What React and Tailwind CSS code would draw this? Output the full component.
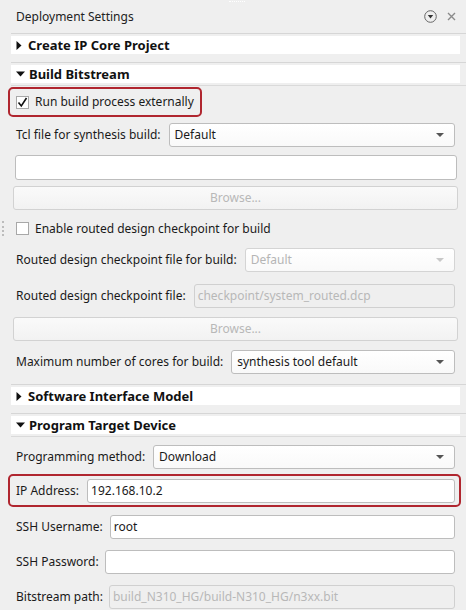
const Caret = ({ open }) =>
  open ? (
    <svg width="9" height="6" viewBox="0 0 9 6" className="mr-[4px] shrink-0">
      <path d="M0 0.5h9L4.5 5.5z" fill="#111" />
    </svg>
  ) : (
    <svg width="6" height="9" viewBox="0 0 6 9" className="mr-[6px] shrink-0">
      <path d="M0.5 0v9L5.5 4.5z" fill="#111" />
    </svg>
  );

const SectionHeader = ({ title, open, bottom }) => (
  <div className={bottom ? 'pb-[2px] border-b border-[#dadada] ml-[11px]' : 'ml-[11px]'}>
    <div className="border-t border-[#d6d6d6] pt-[2px]">
      <div className="h-[18px] mr-[6px] bg-white flex items-center pl-[5px] text-[13px] font-bold text-[#111] leading-none">
        <Caret open={open} />
        {title}
      </div>
    </div>
  </div>
);

const Select = ({ value, disabled, className = '' }) => (
  <div
    className={`h-[24px] flex items-center justify-between pl-[5px] pr-[10px] rounded-[3px] border bg-gradient-to-b from-white to-[#f9f9f9] ${
      disabled ? 'border-[#d4d4d4] text-[#b5b5b5]' : 'border-[#bdbdbd] text-[#1a1a1a]'
    } ${className}`}
  >
    <span>{value}</span>
    <svg width="8" height="4" viewBox="0 0 8 4">
      <path d="M0 0h8L4 4z" fill={disabled ? '#c8c8c8' : '#555'} />
    </svg>
  </div>
);

const Input = ({ value = '', disabled, className = '' }) => (
  <div
    className={`h-[24px] flex items-center px-[3px] rounded-[3px] border ${
      disabled ? 'bg-[#efefef] border-[#d0d0d0] text-[#b8b8b8]' : 'bg-white border-[#bdbdbd] text-[#1a1a1a]'
    } ${className}`}
  >
    {value}
  </div>
);

const BrowseButton = ({ className = '' }) => (
  <div
    className={`h-[24px] ml-[-3px] mr-[-3px] flex items-center justify-center rounded-[3px] border border-[#d2d2d2] bg-gradient-to-b from-[#fafafa] to-[#f2f2f2] text-[#b8b8b8] ${className}`}
  >
    Browse...
  </div>
);

const Checkbox = ({ checked }) => (
  <span className="w-[13px] h-[13px] border border-[#a8a8a8] bg-white flex items-center justify-center shrink-0">
    {checked && (
      <svg width="11" height="11" viewBox="0 0 11 11">
        <path d="M1.5 5.5l2.8 3.5L9.5 1" fill="none" stroke="#111" strokeWidth="1.6" />
      </svg>
    )}
  </span>
);

const Row = ({ label, children, className = '', gap = 'mr-[8px]' }) => (
  <div className={`flex items-center ${className}`}>
    <span className={`shrink-0 ${gap}`}>{label}</span>
    <div className="flex-1">{children}</div>
  </div>
);

export default function App() {
  return (
    <div
      className="w-[466px] h-[610px] overflow-hidden bg-[#efefef] text-[12px] text-[#1a1a1a] leading-none relative"
      style={{ fontFamily: '"Noto Sans", "Open Sans", sans-serif' }}
    >
      <div className="absolute top-[1px] left-[229px] w-[16px] border-t border-dotted border-white" />

      <div className="h-[33px] flex items-center pl-[16px] pr-[10px] text-[#222]">
        <span className="flex-1">Deployment Settings</span>
        <svg width="13" height="13" viewBox="0 0 13 13" className="mr-[10px]">
          <circle cx="6.5" cy="6.5" r="5.8" fill="none" stroke="#666" strokeWidth="1" />
          <path d="M3.8 5h5.4L6.5 8.4z" fill="#333" />
        </svg>
        <svg width="9" height="9" viewBox="0 0 9 9">
          <path d="M1 1l7 7M8 1l-7 7" stroke="#8a8a8a" strokeWidth="1.4" />
        </svg>
      </div>

      <SectionHeader title="Create IP Core Project" />
      <div className="h-[8px]" />
      <SectionHeader title="Build Bitstream" open bottom />

      <div className="pl-[16px] pr-[11px]">
        <div className="mt-[1px] ml-[-8px] w-[194px] h-[30px] border-2 border-[#b0262f] rounded-[5px] flex items-center pl-[6px] gap-[6px] whitespace-nowrap">
          <Checkbox checked />
          <span>Run build process externally</span>
        </div>

        <Row label="Tcl file for synthesis build:" className="mt-[6px]">
          <Select value="Default" />
        </Row>

        <Input className="mt-[8px] ml-[-1px] mr-[-2px] h-[25px]" />

        <BrowseButton className="mt-[6px]" />

        <div className="mt-[12px] h-[13px] flex items-center gap-[6px] relative">
          <span className="absolute left-[-14px] top-[-1px] h-[15px] border-l-2 border-dotted border-[#bcbcbc]" />
          <Checkbox />
          <span>Enable routed design checkpoint for build</span>
        </div>

        <Row label="Routed design checkpoint file for build:" className="mt-[13px]">
          <Select value="Default" disabled />
        </Row>

        <Row label="Routed design checkpoint file:" className="mt-[12px]">
          <Input value="checkpoint/system_routed.dcp" disabled className="h-[23px]" />
        </Row>

        <BrowseButton className="mt-[9px]" />

        <Row label="Maximum number of cores for build:" className="mt-[9px]">
          <Select value="synthesis tool default" />
        </Row>
      </div>

      <div className="h-[10px]" />
      <SectionHeader title="Software Interface Model" />
      <div className="h-[8px]" />
      <SectionHeader title="Program Target Device" open bottom />

      <div className="pl-[16px] pr-[11px]">
        <Row label="Programming method:" className="mt-[8px]">
          <Select value="Download" />
        </Row>

        <div className="mt-[5px] ml-[-8px] mr-[-6px] h-[33px] border-2 border-[#b0262f] rounded-[5px] flex items-center pl-[6px] pr-[4px]">
          <span className="shrink-0 mr-[8px]">IP Address:</span>
          <Input value="192.168.10.2" className="flex-1" />
        </div>

        <Row label="SSH Username:" className="mt-[8px]" gap="mr-[7px]">
          <Input value="root" />
        </Row>

        <Row label="SSH Password:" className="mt-[11px]" gap="mr-[6px]">
          <Input />
        </Row>

        <Row label="Bitstream path:" className="mt-[11px]" gap="mr-[6px]">
          <Input value="build_N310_HG/build-N310_HG/n3xx.bit" disabled />
        </Row>
      </div>
    </div>
  );
}
